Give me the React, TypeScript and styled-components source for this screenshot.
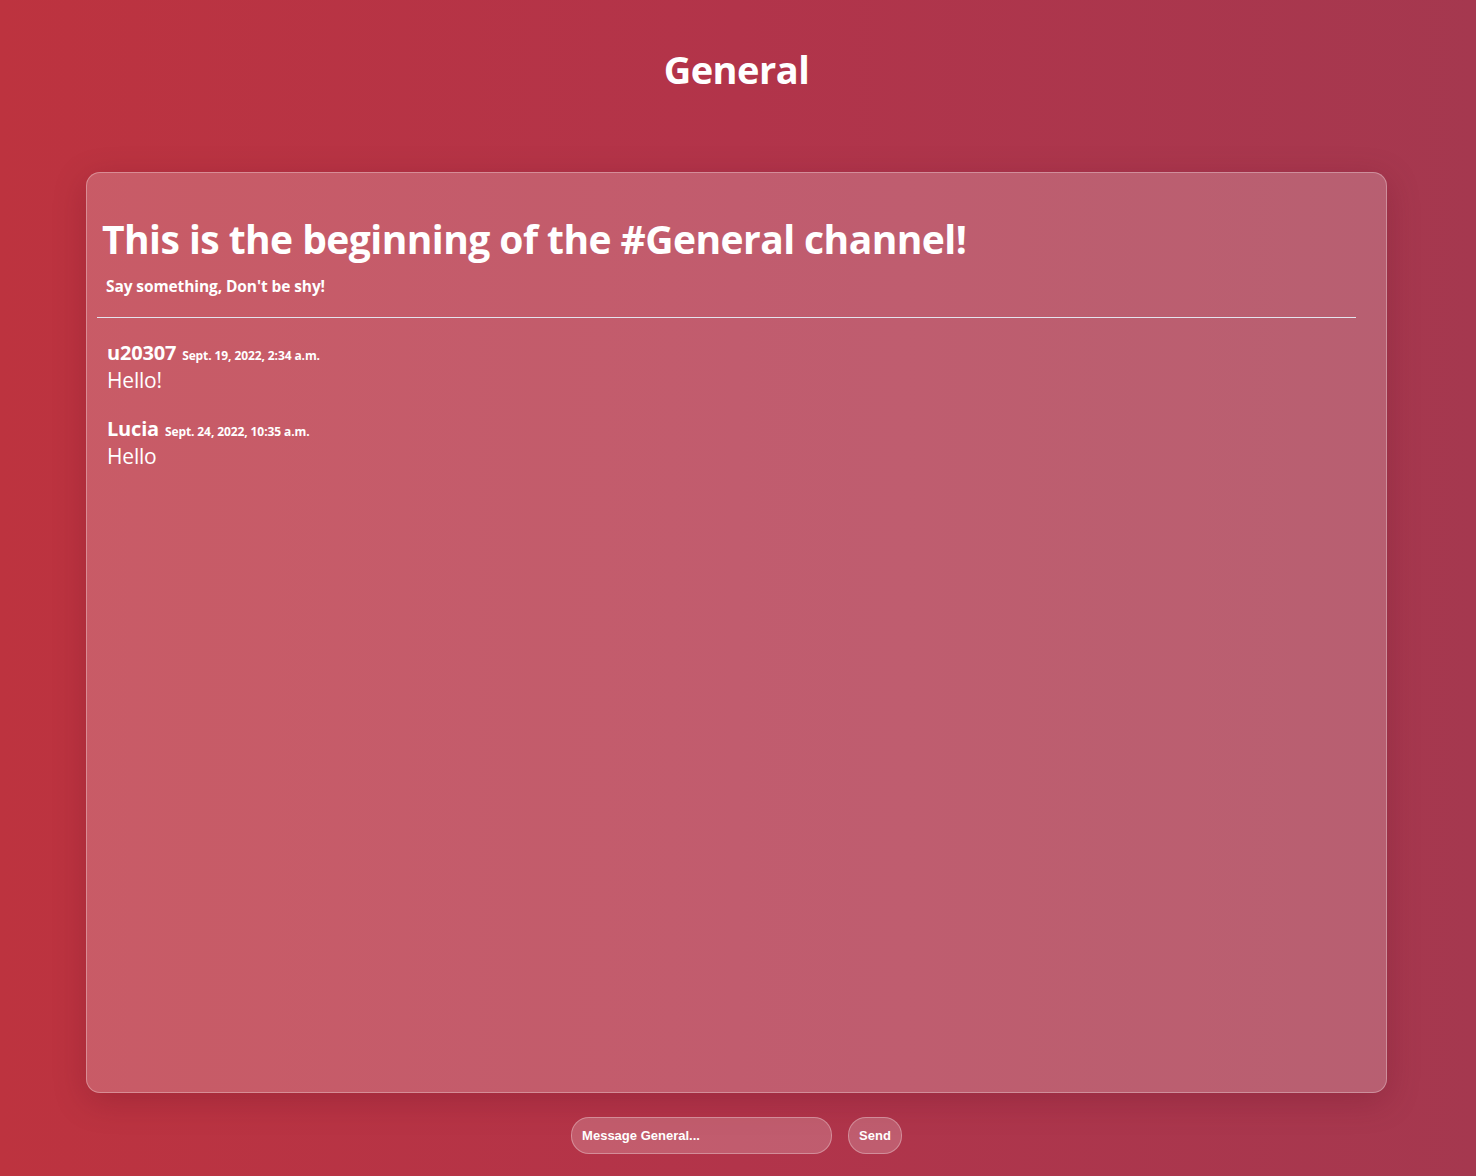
import styled, { createGlobalStyle } from 'styled-components';

const GlobalStyle = createGlobalStyle`
  html, body {
    margin: 0;
    padding: 0;
  }
  body {
    min-height: 1176px;
    background: linear-gradient(90deg, #bd333f 0%, #b2344a 50%, #a5384f 100%);
    font-family: "Open Sans", "Noto Sans", sans-serif;
    color: #fff;
  }
`;

const Page = styled.div`
  display: flex;
  flex-direction: column;
  align-items: center;
  width: 1473px;
  height: 1176px;
  box-sizing: border-box;
`;

const Title = styled.h1`
  margin: 43px 0 0;
  height: 52px;
  font-size: 38px;
  line-height: 52px;
  font-weight: 700;
  letter-spacing: -0.5px;
`;

const Card = styled.section`
  margin-top: 77px;
  width: 1301px;
  height: 921px;
  box-sizing: border-box;
  padding: 38px 30px 0 10px;
  border-radius: 14px;
  border: 1px solid rgba(255, 255, 255, 0.3);
  background: rgba(255, 255, 255, 0.2);
  box-shadow: 0 8px 32px rgba(90, 10, 30, 0.25);
`;

const Intro = styled.div`
  padding-left: 5px;
`;

const Heading = styled.h2`
  margin: 0;
  font-size: 39px;
  line-height: 56px;
  font-weight: 700;
  letter-spacing: -0.55px;
`;

const Sub = styled.p`
  margin: 9px 0 0 4px;
  font-size: 15.5px;
  line-height: 20px;
  font-weight: 700;
  letter-spacing: -0.1px;
`;

const Rule = styled.hr`
  margin: 21px 0 0;
  border: 0;
  border-top: 1px solid #e4e4ee;
`;

const Messages = styled.div`
  display: flex;
  flex-direction: column;
  gap: 21px;
  padding: 22px 0 0 10px;
`;

const Message = styled.div`
  display: flex;
  flex-direction: column;
`;

const Meta = styled.div`
  display: flex;
  align-items: baseline;
  gap: 6px;
`;

const User = styled.span`
  font-size: 20px;
  line-height: 25px;
  font-weight: 700;
  letter-spacing: -0.2px;
`;

const Stamp = styled.span`
  font-size: 12px;
  font-weight: 700;
  letter-spacing: -0.1px;
`;

const Body = styled.span`
  font-size: 21px;
  line-height: 30px;
  font-weight: 400;
  letter-spacing: -0.2px;
`;

const Composer = styled.form`
  display: flex;
  gap: 16px;
  margin-top: 24px;
`;

const Input = styled.input`
  width: 261px;
  height: 37px;
  box-sizing: border-box;
  padding: 0 10px;
  border-radius: 18px;
  border: 1px solid rgba(255, 255, 255, 0.3);
  background: rgba(255, 255, 255, 0.2);
  color: #fff;
  font-family: "Liberation Sans", Arial, sans-serif;
  font-size: 13px;
  font-weight: 700;
  outline: none;
  &::placeholder {
    color: #fff;
    opacity: 1;
  }
`;

const Send = styled.button`
  height: 37px;
  padding: 0 10px;
  border-radius: 18px;
  border: 1px solid rgba(255, 255, 255, 0.3);
  background: rgba(255, 255, 255, 0.2);
  color: #fff;
  font-family: "Liberation Sans", Arial, sans-serif;
  font-size: 13px;
  font-weight: 700;
`;

const messages = [
  { user: 'u20307', at: 'Sept. 19, 2022, 2:34 a.m.', text: 'Hello!' },
  { user: 'Lucia', at: 'Sept. 24, 2022, 10:35 a.m.', text: 'Hello' },
];

export default function App() {
  return (
    <Page>
      <GlobalStyle />
      <Title>General</Title>
      <Card>
        <Intro>
          <Heading>This is the beginning of the #General channel!</Heading>
          <Sub>Say something, Don't be shy!</Sub>
        </Intro>
        <Rule />
        <Messages>
          {messages.map((m) => (
            <Message key={m.user}>
              <Meta>
                <User>{m.user}</User>
                <Stamp>{m.at}</Stamp>
              </Meta>
              <Body>{m.text}</Body>
            </Message>
          ))}
        </Messages>
      </Card>
      <Composer onSubmit={(e) => e.preventDefault()}>
        <Input placeholder="Message General..." />
        <Send type="submit">Send</Send>
      </Composer>
    </Page>
  );
}
